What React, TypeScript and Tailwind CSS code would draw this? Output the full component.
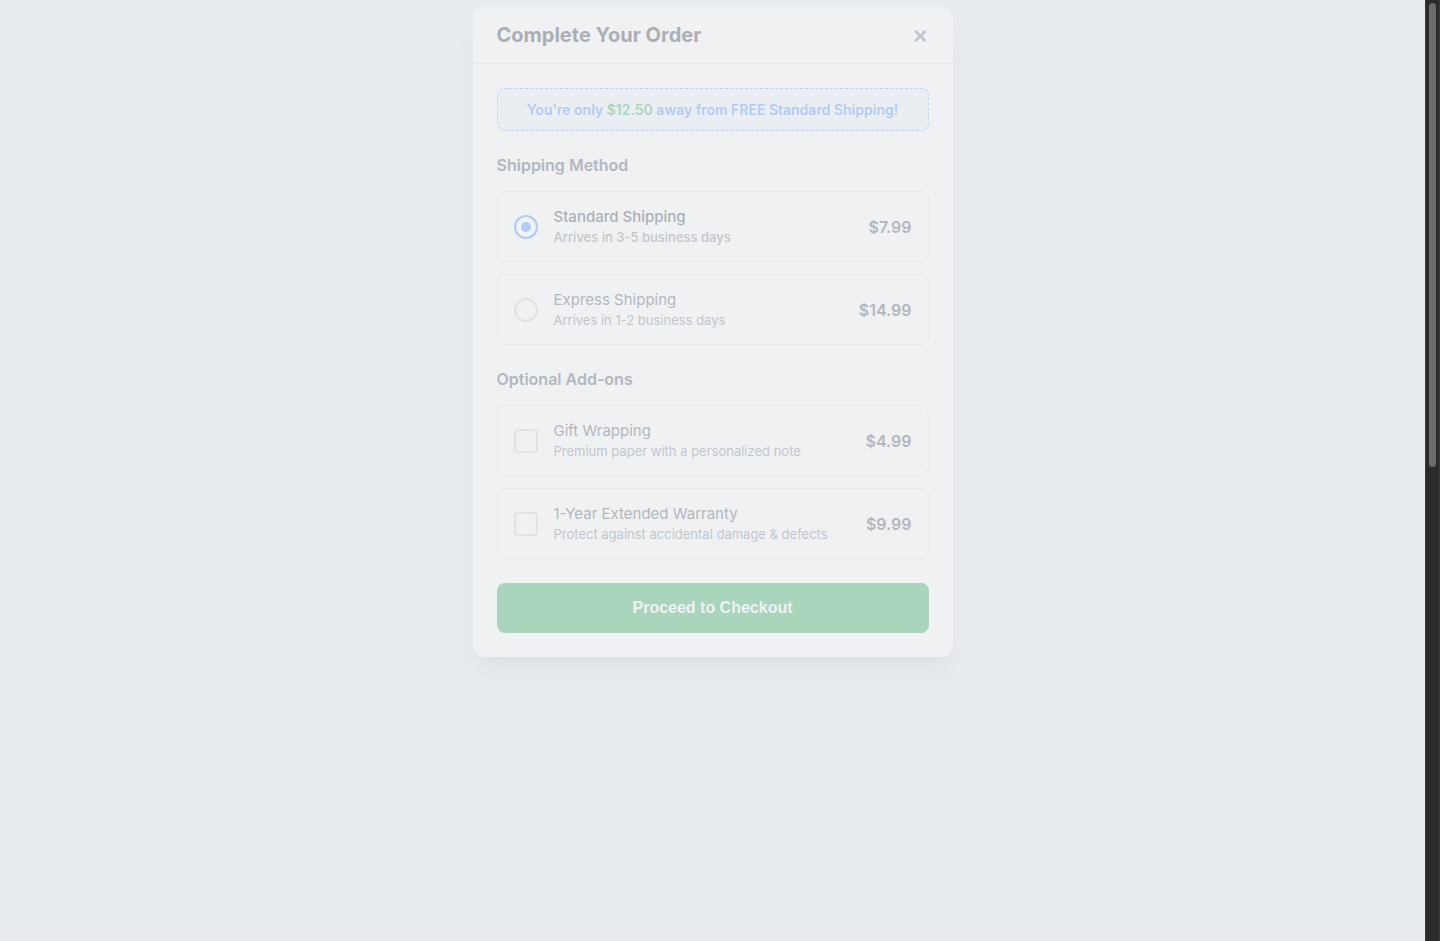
interface Option {
  title: string;
  desc: string;
  price: string;
  selected?: boolean;
}

const shipping: Option[] = [
  { title: "Standard Shipping", desc: "Arrives in 3-5 business days", price: "$7.99", selected: true },
  { title: "Express Shipping", desc: "Arrives in 1-2 business days", price: "$14.99" },
];

const addons: Option[] = [
  { title: "Gift Wrapping", desc: "Premium paper with a personalized note", price: "$4.99" },
  { title: "1-Year Extended Warranty", desc: "Protect against accidental damage & defects", price: "$9.99" },
];

function Radio({ on }: { on?: boolean }) {
  return on ? (
    <span className="grid h-6 w-6 shrink-0 place-items-center rounded-full border-2 border-[#3b82f6]">
      <span className="h-2.5 w-2.5 rounded-full bg-[#3b82f6]" />
    </span>
  ) : (
    <span className="h-6 w-6 shrink-0 rounded-full border-2 border-[#d1d5db]" />
  );
}

function Row({ item, kind }: { item: Option; kind: "radio" | "check" }) {
  return (
    <div className="flex items-center gap-4 rounded-lg border border-[#e5e7eb] bg-white px-4 py-[14.5px]">
      {kind === "radio" ? (
        <Radio on={item.selected} />
      ) : (
        <span className="h-6 w-6 shrink-0 rounded border-2 border-[#d1d5db]" />
      )}
      <div className="flex-1">
        <div className={`text-[15px] leading-5 ${item.selected ? "font-medium text-[#1f2937]" : "text-[#374151]"}`}>
          {item.title}
        </div>
        <div className={`text-[13px] leading-5 ${item.selected ? "font-medium text-[#6b7280]" : "text-[#6b7280]"}`}>
          {item.desc}
        </div>
      </div>
      <span className="text-base font-semibold text-[#374151]">{item.price}</span>
    </div>
  );
}

export default function App() {
  return (
    <div className="flex h-screen overflow-hidden bg-[#e8ebef] font-['Inter',sans-serif]">
      <main className="flex flex-1 justify-center pt-[7px]">
        <div className="h-fit w-[480px] rounded-xl bg-white opacity-30 shadow-xl">
          <div className="flex items-center justify-between border-b border-[#e5e7eb] px-6 py-[14px]">
            <h2 className="text-xl leading-7 font-bold text-[#1f2937]">Complete Your Order</h2>
            <button className="text-2xl leading-none font-semibold text-[#6b7280]" aria-label="Close">
              ×
            </button>
          </div>

          <div className="p-6">
            <div className="rounded-lg border border-dashed border-[#60a5fa] bg-[#eff6ff] py-2.5 text-center text-sm leading-[21px] font-semibold text-[#3b82f6]">
              You're only <span className="text-[#16a34a]">$12.50</span> away from FREE Standard Shipping!
            </div>

            <h3 className="mt-[22px] mb-[14px] text-base leading-6 font-semibold text-[#374151]">Shipping Method</h3>
            <div className="space-y-3">
              {shipping.map((s) => (
                <Row key={s.title} item={s} kind="radio" />
              ))}
            </div>

            <h3 className="mt-[22px] mb-[14px] text-base leading-6 font-semibold text-[#374151]">Optional Add-ons</h3>
            <div className="space-y-3">
              {addons.map((a) => (
                <Row key={a.title} item={a} kind="check" />
              ))}
            </div>

            <button className="mt-6 w-full rounded-lg bg-[#16a34a] py-3.5 font-['Liberation_Sans',sans-serif] text-base leading-[22px] font-bold text-white">
              Proceed to Checkout
            </button>
          </div>
        </div>
      </main>

      {/* page scrollbar */}
      <div className="w-[15px] shrink-0 border-x border-[#3a3a3a] bg-[#2b2b2b] px-[3px] pt-[3px]">
        <div className="h-[464px] rounded-full bg-[#6b6b6b]" />
      </div>
    </div>
  );
}
